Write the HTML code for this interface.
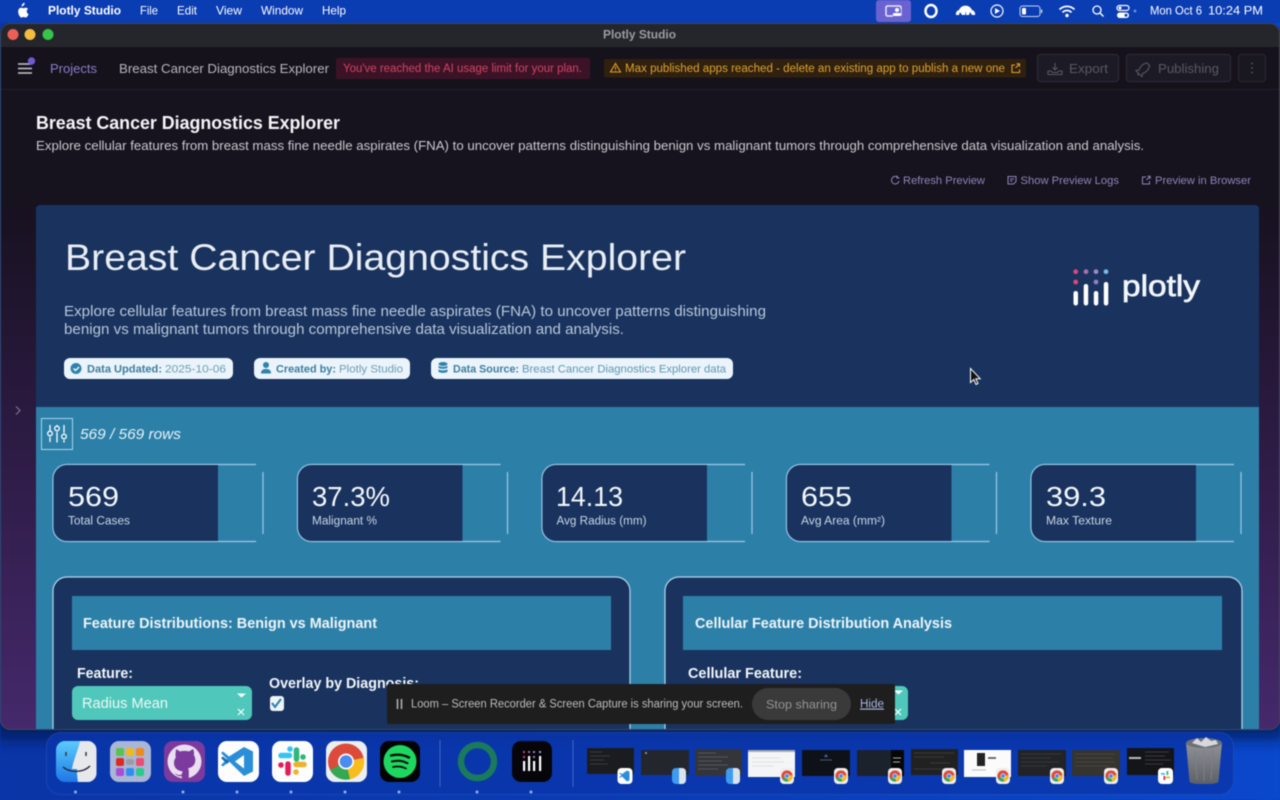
<!DOCTYPE html>
<html><head><meta charset="utf-8"><title>Plotly Studio</title>
<style>html,body{margin:0;padding:0;width:1280px;height:800px;overflow:hidden;background:#0a3cb4}svg{display:block;filter:blur(.4px)}text{font-family:"Liberation Sans",sans-serif;white-space:pre}</style></head>
<body>
<svg width="1280" height="800" viewBox="0 0 1280 800" xmlns="http://www.w3.org/2000/svg">
<defs>
<linearGradient id="desk" x1="0" y1="0" x2="1" y2="0"><stop offset="0" stop-color="#0a35a6"/><stop offset=".5" stop-color="#0a3cb4"/><stop offset="1" stop-color="#0a48cc"/></linearGradient>
<linearGradient id="bgv" x1="0" y1="0" x2="0" y2="1"><stop offset="0" stop-color="#14101c"/><stop offset=".25" stop-color="#17111f"/><stop offset=".55" stop-color="#2a1a40"/><stop offset="1" stop-color="#45296c"/></linearGradient>
<linearGradient id="fin" x1="0" y1="0" x2="0" y2="1"><stop offset="0" stop-color="#5ccbfb"/><stop offset="1" stop-color="#1d78e6"/></linearGradient>
<linearGradient id="trash" x1="0" y1="0" x2="0" y2="1"><stop offset="0" stop-color="#8f9297"/><stop offset="1" stop-color="#5d6066"/></linearGradient>
<filter id="sh" x="-5%" y="-5%" width="110%" height="110%"><feGaussianBlur stdDeviation="7"/></filter>
<clipPath id="win"><rect x="0" y="23" width="1280" height="707" rx="10"/></clipPath>
<g id="bchrome"><rect x="-7" y="-8" width="14" height="16" rx="4" fill="#eee"/><circle r="5.6" fill="#e0483a"/><path d="M0 0L-5 2.5A5.6 5.6 0 0 0 1 5.5Z" fill="#34a853"/><path d="M0 0L1 5.5A5.6 5.6 0 0 0 5.4 -1Z" fill="#f9bc15"/><circle r="2.5" fill="#fff"/><circle r="1.9" fill="#4285f4"/></g>
<g id="bfinder"><rect x="-7" y="-8" width="14" height="16" rx="4" fill="#3c9df0"/><path d="M0-8h3a4 4 0 0 1 4 4v8a4 4 0 0 1-4 4H0z" fill="#d9e3ee"/></g>
</defs>

<rect width="1280" height="800" fill="url(#desk)"/>
<!-- menu bar -->
<rect width="1280" height="23" fill="#0a3cb2"/>
<path d="M23.8 5.2c.7-.8 1-1.7.9-2.5-.9.1-1.8.6-2.3 1.3-.5.6-.9 1.5-.8 2.4.9 0 1.7-.5 2.2-1.200zM26.7 11.2c0-1.5 1.2-2.2 1.3-2.3-.7-1.1-1.8-1.2-2.2-1.2-.9-.1-1.900.6-2.400.6s-1.300-.6-2.100-.5c-1.100 0-2.100.6-2.600 1.600-1.100 2-.3 4.900.8 6.500.5.8 1.200 1.700 2 1.600.8 0 1.100-.5 2.100-.5s1.300.5 2.100.5c.9 0 1.400-.8 2-1.600.6-.9.9-1.800.9-1.800s-1.900-.8-1.900-2.900z" fill="#fff"/>
<g fill="#fff" font-size="12">
<text x="48" y="14.5" font-weight="700" lengthAdjust="spacingAndGlyphs" textLength="73">Plotly Studio</text>
<text x="140" y="14.5" lengthAdjust="spacingAndGlyphs" textLength="18">File</text>
<text x="177" y="14.5" lengthAdjust="spacingAndGlyphs" textLength="20">Edit</text>
<text x="216" y="14.5" lengthAdjust="spacingAndGlyphs" textLength="26">View</text>
<text x="261" y="14.5" lengthAdjust="spacingAndGlyphs" textLength="42">Window</text>
<text x="322" y="14.5" lengthAdjust="spacingAndGlyphs" textLength="24">Help</text>
<text x="1150" y="14.5" lengthAdjust="spacingAndGlyphs" textLength="52">Mon Oct 6</text>
<text x="1208" y="14.5" lengthAdjust="spacingAndGlyphs" textLength="55">10:24 PM</text>
</g>
<rect x="876" y="0" width="35" height="22" rx="3" fill="#6b62d2"/>
<rect x="886" y="6" width="15" height="10" rx="1.5" fill="none" stroke="#e8e8f8" stroke-width="1.5"/><rect x="893" y="9" width="8" height="8" fill="#6b62d2"/><circle cx="897" cy="10" r="2" fill="#fff"/><rect x="893" y="13" width="8" height="3" rx="1" fill="#fff"/>
<ellipse cx="931" cy="11" rx="5.5" ry="6" fill="none" stroke="#fff" stroke-width="2.5"/>
<path d="M956 15a4 4 0 0 1 3-5 7 7 0 0 1 13 0 4 4 0 0 1 3 5h-3l-2-3-1 3h-3v-4l-1 4h-3l-2-3-1 3z" fill="#fff"/>
<circle cx="997" cy="11" r="6" fill="none" stroke="#fff" stroke-width="1.2"/><path d="M995 8l5 3-5 3z" fill="#fff"/>
<rect x="1020" y="6" width="20" height="10.5" rx="2.5" fill="none" stroke="#c8d4f0" stroke-width="1"/><rect x="1022" y="8" width="4" height="6.5" rx="1" fill="#fff"/><rect x="1041" y="9.5" width="1.3" height="3.5" fill="#c8d4f0"/>
<g fill="none" stroke="#fff" stroke-width="1.7"><path d="M1059.5 9.5a10.5 10.5 0 0 1 15 0"/><path d="M1062.5 12.5a6 6 0 0 1 9 0"/></g><circle cx="1067" cy="15.5" r="1.7" fill="#fff"/>
<circle cx="1097" cy="10" r="4" fill="none" stroke="#fff" stroke-width="1.3"/><path d="M1100 13l3.5 3.5" stroke="#fff" stroke-width="1.4"/>
<rect x="1117" y="5.5" width="12" height="5" rx="2.5" fill="none" stroke="#fff" stroke-width="1.2"/><circle cx="1120" cy="8" r="1.5" fill="#fff"/><rect x="1117" y="12.5" width="12" height="5.500" rx="2.700" fill="#fff"/><circle cx="1126" cy="15.2" r="1.5" fill="#0a3cb2"/>
<circle cx="1135" cy="11" r="1.5" fill="#5d8be0"/>

<!-- window shadow -->
<rect x="-10" y="40" width="1300" height="700" rx="12" fill="#02124a" opacity=".7" filter="url(#sh)"/>
<g clip-path="url(#win)">
<rect x="0" y="23" width="1280" height="707" fill="url(#bgv)"/>
<rect x="0" y="23" width="1280" height="25" fill="#25262b"/>
<rect x="0" y="47" width="1280" height="42" fill="#15121b"/>
<rect x="0" y="89" width="1280" height="1" fill="#25222b"/>
<rect x="0" y="90" width="1280" height="115" fill="#16121e"/>

<!-- content panel -->
<rect x="36" y="205" width="1223" height="560" rx="4" fill="#19335e"/>
<rect x="36" y="407" width="1223" height="340" fill="#2c80a8"/>

<text x="65" y="270" font-size="37" fill="#e9eef5" lengthAdjust="spacingAndGlyphs" textLength="621">Breast Cancer Diagnostics Explorer</text>
<text x="64" y="316" font-size="14.5" fill="#b9c7da" lengthAdjust="spacingAndGlyphs" textLength="702">Explore cellular features from breast mass fine needle aspirates (FNA) to uncover patterns distinguishing</text>
<text x="64" y="334" font-size="14.5" fill="#b9c7da" lengthAdjust="spacingAndGlyphs" textLength="560">benign vs malignant tumors through comprehensive data visualization and analysis.</text>

<!-- pills -->
<g font-size="11">
<rect x="64" y="358" width="169" height="21" rx="6" fill="#eaf4fa"/>
<circle cx="76" cy="368.5" r="5.5" fill="#2f82ad"/><path d="M73.5 368.5l2 2 3.5-3.5" fill="none" stroke="#fff" stroke-width="1.3"/>
<text x="87" y="372.5" font-weight="700" fill="#3f7da0" lengthAdjust="spacingAndGlyphs" textLength="75">Data Updated:</text><text x="165" y="372.5" fill="#6e9db8" lengthAdjust="spacingAndGlyphs" textLength="61">2025-10-06</text>
<rect x="254" y="358" width="156" height="21" rx="6" fill="#eaf4fa"/>
<circle cx="266" cy="365" r="3" fill="#2f82ad"/><path d="M261 373.5c0-3.5 2-4.5 5-4.5s5 1 5 4.5z" fill="#2f82ad"/>
<text x="276" y="372.5" font-weight="700" fill="#3f7da0" lengthAdjust="spacingAndGlyphs" textLength="60">Created by:</text><text x="339" y="372.5" fill="#6e9db8" lengthAdjust="spacingAndGlyphs" textLength="64">Plotly Studio</text>
<rect x="431" y="358" width="302" height="21" rx="6" fill="#eaf4fa"/>
<ellipse cx="443" cy="364" rx="4.5" ry="2" fill="#2f82ad"/><path d="M438.5 365.5c1 1.8 8 1.8 9 0v2c-1 1.8-8 1.8-9 0zM438.5 369c1 1.8 8 1.8 9 0v2.5c-1 1.8-8 1.8-9 0z" fill="#2f82ad"/>
<text x="453" y="372.5" font-weight="700" fill="#3f7da0" lengthAdjust="spacingAndGlyphs" textLength="66">Data Source:</text><text x="522" y="372.5" fill="#5f96b5" lengthAdjust="spacingAndGlyphs" textLength="204">Breast Cancer Diagnostics Explorer data</text>
</g>

<!-- plotly logo -->
<g>
<circle cx="1075.7" cy="271.7" r="2.4" fill="#e0457f"/><circle cx="1086" cy="271.7" r="2.4" fill="#b06ca8"/><circle cx="1096" cy="271.7" r="2.4" fill="#9a88c8"/><circle cx="1106" cy="271.7" r="2.4" fill="#7cb8e8"/>
<circle cx="1075.7" cy="282" r="2.4" fill="#e0457f"/><circle cx="1096" cy="282" r="2.4" fill="#8e80c4"/>
<g fill="#fff"><rect x="1073.5" y="291" width="4.5" height="14.5" rx="2.2"/><rect x="1083.7" y="284" width="4.5" height="21.5" rx="2.2"/><rect x="1093.8" y="291" width="4.5" height="14.5" rx="2.2"/><rect x="1103.8" y="282" width="4.5" height="23.5" rx="2.2"/></g>
<text x="1122" y="296" font-size="30" fill="#f2f6fa" stroke="#f2f6fa" stroke-width=".7" lengthAdjust="spacingAndGlyphs" textLength="78">plotly</text>
</g>

<!-- filter row -->
<rect x="41.5" y="418.5" width="31" height="31" fill="#2c80a8" stroke="#a8d4ea" stroke-width="1"/>
<g stroke="#fff" stroke-width="1.3" fill="none"><path d="M50 425v5.500M50 437v5M57 425v.5M57 432v10.500M64 425v8M64 440v2.500"/><circle cx="50" cy="433.5" r="2.3"/><circle cx="57" cy="428.5" r="2.3"/><circle cx="64" cy="436.5" r="2.3"/></g>
<text x="80" y="439" font-size="14.5" font-style="italic" fill="#e8f1f7" lengthAdjust="spacingAndGlyphs" textLength="101">569 / 569 rows</text>

<!-- stat cards -->
<g id="c1">
<path d="M256 464.5H67a14 14 0 0 0-14 14v49a14 14 0 0 0 14 14h189" fill="none" stroke="#9cc8e8" stroke-width="1.2"/>
<path d="M218 465H67a13.5 13.5 0 0 0-13.5 13.5v49A13.5 13.5 0 0 0 67 541h151z" fill="#19335e"/>
<path d="M263 472v62" stroke="#9cc8e8" stroke-width="1.2"/>
</g>
<use href="#c1" x="244.5"/><use href="#c1" x="489"/><use href="#c1" x="733.5"/><use href="#c1" x="978"/>
<g fill="#f3f7fb" font-size="28">
<text x="68" y="506" lengthAdjust="spacingAndGlyphs" textLength="51">569</text><text x="312" y="506" lengthAdjust="spacingAndGlyphs" textLength="78">37.3%</text><text x="556" y="506" lengthAdjust="spacingAndGlyphs" textLength="67">14.13</text><text x="801" y="506" lengthAdjust="spacingAndGlyphs" textLength="51">655</text><text x="1046" y="506" lengthAdjust="spacingAndGlyphs" textLength="60">39.3</text>
</g>
<g fill="#c9d6e6" font-size="11.5">
<text x="68" y="524.5" lengthAdjust="spacingAndGlyphs" textLength="62">Total Cases</text><text x="312" y="524.5" lengthAdjust="spacingAndGlyphs" textLength="65">Malignant %</text><text x="556.5" y="524.5" lengthAdjust="spacingAndGlyphs" textLength="90">Avg Radius (mm)</text><text x="801" y="524.5" lengthAdjust="spacingAndGlyphs" textLength="84">Avg Area (mm²)</text><text x="1046" y="524.5" lengthAdjust="spacingAndGlyphs" textLength="66">Max Texture</text>
</g>

<!-- chart cards -->
<rect x="53" y="577" width="577" height="200" rx="14" fill="#19335e" stroke="#b4d6ec" stroke-width="1.2"/>
<rect x="665" y="577" width="577" height="200" rx="14" fill="#19335e" stroke="#b4d6ec" stroke-width="1.2"/>
<rect x="72" y="596" width="539" height="54" fill="#2c80a8"/>
<rect x="683" y="596" width="539" height="54" fill="#2c80a8"/>
<text x="83" y="628" font-size="14.5" font-weight="700" fill="#eef4f9" lengthAdjust="spacingAndGlyphs" textLength="294">Feature Distributions: Benign vs Malignant</text>
<text x="695" y="628" font-size="14.5" font-weight="700" fill="#eef4f9" lengthAdjust="spacingAndGlyphs" textLength="257">Cellular Feature Distribution Analysis</text>
<text x="77" y="678" font-size="14.5" font-weight="700" fill="#f3f6fa" lengthAdjust="spacingAndGlyphs" textLength="56">Feature:</text>
<text x="688" y="678" font-size="14.5" font-weight="700" fill="#f3f6fa" lengthAdjust="spacingAndGlyphs" textLength="114">Cellular Feature:</text>
<text x="269" y="688" font-size="14.5" font-weight="700" fill="#f3f6fa" lengthAdjust="spacingAndGlyphs" textLength="150">Overlay by Diagnosis:</text>
<rect x="72" y="686" width="180" height="34" rx="6" fill="#4fc8bb"/>
<text x="82" y="708" font-size="14.5" fill="#eef8f6" lengthAdjust="spacingAndGlyphs" textLength="86">Radius Mean</text>
<path d="M237 693.5h9l-4.5 4z" fill="#fff"/><path d="M238 709l6 6M244 709l-6 6" stroke="#fff" stroke-width="1.2"/>
<rect x="270" y="696" width="14" height="15" rx="3" fill="#eef4f8"/><path d="M272 703l3 4 6-8" fill="none" stroke="#2c80a8" stroke-width="2"/>
<rect x="684" y="686" width="224" height="34" rx="6" fill="#4fc8bb"/>
<path d="M894 690.5h9l-4.5 4z" fill="#fff"/><path d="M895 709l6 6M901 709l-6 6" stroke="#fff" stroke-width="1.2"/>
</g>

<!-- title bar -->
<circle cx="13" cy="34.5" r="5.5" fill="#ec5f57"/><circle cx="30" cy="34.5" r="5.5" fill="#f5bd3e"/><circle cx="48" cy="34.5" r="5.5" fill="#35c54a"/>
<text x="603" y="38.5" font-size="12" font-weight="700" fill="#9c9da1" lengthAdjust="spacingAndGlyphs" textLength="73">Plotly Studio</text>
<rect x=".5" y="23.5" width="1279" height="706" rx="10" fill="none" stroke="#3e4656" stroke-width="1"/>

<!-- nav -->
<path d="M18 64h13M18 68.5h14M18 73h14" stroke="#c8c8cc" stroke-width="1.6"/>
<circle cx="31.5" cy="61" r="3.7" fill="#7257d6"/>
<text x="50" y="73" font-size="13" fill="#8a7fc8" lengthAdjust="spacingAndGlyphs" textLength="47">Projects</text>
<text x="119" y="73" font-size="13" fill="#b8b8bc" lengthAdjust="spacingAndGlyphs" textLength="210">Breast Cancer Diagnostics Explorer</text>
<rect x="336" y="58" width="254" height="21" rx="2" fill="#3c1326"/>
<text x="343" y="72" font-size="11.5" fill="#d04465" lengthAdjust="spacingAndGlyphs" textLength="239">You've reached the AI usage limit for your plan.</text>
<rect x="604" y="59" width="422" height="18.5" rx="2" fill="#30200f"/>
<path d="M615.5 63.5l5 8.5h-10z" fill="none" stroke="#dfa02a" stroke-width="1.1"/><path d="M615.5 66.5v3M615.5 70.3v.8" stroke="#dfa02a" stroke-width="1"/>
<text x="625" y="72" font-size="11.5" fill="#dca42e" lengthAdjust="spacingAndGlyphs" textLength="380">Max published apps reached - delete an existing app to publish a new one</text>
<path d="M1015 65h-3v7.500h7.500v-3M1015.5 68l4-4M1016.5 63.8h3v3" fill="none" stroke="#dca42e" stroke-width="1.1"/>

<rect x="1037.5" y="54.5" width="81" height="27" rx="3" fill="#1c1a25" stroke="#2f2c3a"/>
<path d="M1048 71v3.500h14V71h-3l-1.500 1.500h-5L1051 71zM1055 63v7M1052.5 67.5l2.500 2.500 2.500-2.500" fill="none" stroke="#5b5865" stroke-width="1.1"/>
<text x="1069" y="73" font-size="13" fill="#5b5865" lengthAdjust="spacingAndGlyphs" textLength="39">Export</text>
<rect x="1126.5" y="54.5" width="104" height="27" rx="3" fill="#1c1a25" stroke="#2f2c3a"/>
<path d="M1149 63c-4 .5-7 3.500-8 7l-3 .5 2.500 3-1 1.500 1.500-1 3 2.500.5-3c3.500-1 6.500-4 7-8z" fill="none" stroke="#5b5865" stroke-width="1.1" transform="translate(-2 0)"/>
<text x="1158" y="73" font-size="13" fill="#5b5865" lengthAdjust="spacingAndGlyphs" textLength="61">Publishing</text>
<rect x="1238.5" y="54.5" width="27" height="27" rx="3" fill="#191820" stroke="#2b2a33"/>
<circle cx="1252" cy="63.5" r=".9" fill="#5b5865"/><circle cx="1252" cy="68" r=".9" fill="#5b5865"/><circle cx="1252" cy="72.5" r=".9" fill="#5b5865"/>

<!-- header -->
<text x="36" y="129" font-size="18" font-weight="700" fill="#f5f5f7" lengthAdjust="spacingAndGlyphs" textLength="304">Breast Cancer Diagnostics Explorer</text>
<text x="36" y="150" font-size="13" fill="#c9c9ce" lengthAdjust="spacingAndGlyphs" textLength="1108">Explore cellular features from breast mass fine needle aspirates (FNA) to uncover patterns distinguishing benign vs malignant tumors through comprehensive data visualization and analysis.</text>
<g font-size="11" fill="#8f86b8">
<text x="903" y="184" lengthAdjust="spacingAndGlyphs" textLength="82">Refresh Preview</text><text x="1020.5" y="184" lengthAdjust="spacingAndGlyphs" textLength="98.5">Show Preview Logs</text><text x="1155" y="184" lengthAdjust="spacingAndGlyphs" textLength="96">Preview in Browser</text>
</g>
<path d="M898 177.5a3.800 3.800 0 1 0 1 3.500M897 175.5v2.500h2.500" fill="none" stroke="#8f86b8" stroke-width="1"/>
<path d="M1008 176.5h8v5l-2.500 2.500H1008zM1010 179h4M1010 181h2.500" fill="none" stroke="#8f86b8" stroke-width="1"/>
<path d="M1146 177h-3.500v7h7v-3M1146.5 180l3.500-3.500M1147.5 176.3h2.700v2.700" fill="none" stroke="#8f86b8" stroke-width="1"/>

<path d="M16 406.5l4 4-4 4" fill="none" stroke="#7f7a94" stroke-width="1.1"/>

<!-- cursor -->
<path d="M970.5 368.5v14l3.300-3 2.200 5 2-1-2.200-4.800h4.400z" fill="#111" stroke="#fff" stroke-width="1"/>

<!-- loom bar -->
<rect x="387" y="684" width="508" height="40" rx="2" fill="#1e1e1f"/>
<path d="M397.5 699v10M401.5 699v10" stroke="#b0b0b0" stroke-width="1.6"/>
<text x="411" y="707.5" font-size="11.5" fill="#bdbdbd" lengthAdjust="spacingAndGlyphs" textLength="332">Loom – Screen Recorder &amp; Screen Capture is sharing your screen.</text>
<rect x="752" y="688" width="99" height="32" rx="16" fill="#3a3a3b"/>
<text x="766" y="708.5" font-size="12" fill="#959595" lengthAdjust="spacingAndGlyphs" textLength="71">Stop sharing</text>
<text x="860" y="707.5" font-size="11.5" fill="#a9b8e0" text-decoration="underline" lengthAdjust="spacingAndGlyphs" textLength="24">Hide</text>

<!-- dock -->
<rect x="46.5" y="732.5" width="1187" height="62" rx="14" fill="#0a36ac" fill-opacity=".85" stroke="#3a62c4" stroke-opacity=".35"/>
<!-- finder -->
<rect x="56" y="741" width="40.5" height="41" rx="9" fill="url(#fin)"/>
<path d="M80 741h7.500a9 9 0 0 1 9 9v23a9 9 0 0 1-9 9H78c-1-6-1-10-1-13h-5c1-8 6-18 8-28z" fill="#e6e8ec"/>
<path d="M66 752v4M86 752v4" stroke="#334" stroke-width="1.5"/>
<path d="M63 767c7 6 20 6 27-1" fill="none" stroke="#223" stroke-width="1.3"/>
<!-- launchpad -->
<rect x="110" y="741" width="41" height="41" rx="9" fill="#a9b6d6"/>
<g><rect x="116" y="748" width="8" height="8" rx="2" fill="#58c24e"/><rect x="126" y="748" width="8" height="8" rx="2" fill="#f2b71f"/><rect x="136" y="748" width="8" height="8" rx="2" fill="#ef8a1c"/><rect x="116" y="758" width="8" height="8" rx="2" fill="#dc2a22"/><rect x="126" y="759" width="8" height="6" rx="2" fill="#9a9ca4"/><rect x="136" y="758" width="8" height="8" rx="2" fill="#ec4b72"/><rect x="116" y="768" width="8" height="8" rx="2" fill="#a84ed2"/><rect x="126" y="768" width="8" height="8" rx="2" fill="#2f8ff0"/><rect x="136" y="768" width="8" height="8" rx="2" fill="#2ec88c"/></g>
<!-- github -->
<rect x="164" y="741" width="41" height="41" rx="9" fill="#7d3a9e"/>
<circle cx="184.5" cy="761.5" r="17" fill="#e9dff0"/>
<path d="M176 749l4 2.500c3-.8 6-.8 9 0l4-2.500c1 2 1.300 4 .8 6 2 3 2 7 0 10-1.500 2-4 3-6 3.400 1 1 1 2 1 3.500V779h-7v-3c-3 .5-5 0-7-3 2 1 3 3 7 1.500 0-1 .3-2 1-3-3-.5-6-1.500-7.500-4-1.800-3-1.800-7 .5-10-.5-2-.3-4 .2-7.500z" fill="#7d3a9e"/>
<!-- vscode -->
<rect x="218" y="741" width="41" height="41" rx="9" fill="#fdfdfd"/>
<path d="M244 747l9 4.500v20L244 776l-15-14.500-6 5-2-1.500 6-6-6-6 2-1.500 6 5z" fill="#2a8fd8"/>
<path d="M244 755l-9 6.500 9 7z" fill="#fff"/>
<path d="M244 747l-15 14.500-6-5-2 1.500 6 6 2-2z" fill="#1a6db5"/>
<!-- slack -->
<rect x="272" y="741" width="41" height="41" rx="9" fill="#fdfdfd"/>
<g stroke-linecap="round" stroke-width="5.5" fill="none"><path d="M281 755.5h8.500" stroke="#36c5f0"/><path d="M296.5 750v9" stroke="#2eb67d"/><path d="M296 764.5h8" stroke="#ecb22e"/><path d="M288 764v9" stroke="#e01e5a"/></g>
<circle cx="290" cy="749" r="2.8" fill="#36c5f0"/><circle cx="303" cy="757" r="2.8" fill="#2eb67d"/><circle cx="296" cy="772" r="2.8" fill="#ecb22e"/><circle cx="281" cy="765" r="2.8" fill="#e01e5a"/>
<!-- chrome -->
<rect x="326" y="741" width="41" height="41" rx="9" fill="#eceff2"/>
<circle cx="346" cy="761.5" r="18" fill="#dc4a3a"/>
<path d="M346 761.5L330 770a18 18 0 0 0 20 9.300z" fill="#35a853"/>
<path d="M346 761.5l4 17.800a18 18 0 0 0 13.700-21.500z" fill="#f8bd1c"/>
<circle cx="346" cy="761.5" r="8" fill="#fff"/><circle cx="346" cy="761.5" r="6.3" fill="#4a8cf0"/>
<!-- spotify -->
<rect x="380" y="741" width="40" height="41" rx="9" fill="#030303"/>
<circle cx="400" cy="761.5" r="16.5" fill="#1ed760"/>
<g fill="none" stroke="#0a0a0a" stroke-linecap="round"><path d="M391 755.5c6-1.500 12-1 18 2" stroke-width="2.4"/><path d="M392 761.5c5-1.300 11-.8 15.500 1.700" stroke-width="2"/><path d="M393 767c4.500-1 9-.6 13 1.500" stroke-width="1.7"/></g>
<path d="M440 740v47" stroke="#3f66c4" stroke-width="1"/>
<!-- loom ring -->
<circle cx="477.5" cy="761.5" r="16.5" fill="none" stroke="#1a7a5c" stroke-width="6.5"/>
<!-- plotly app -->
<rect x="512" y="741" width="40" height="41" rx="9" fill="#06060a"/>
<g><circle cx="524" cy="752" r="1.1" fill="#e0457f"/><circle cx="529" cy="752" r="1.1" fill="#b06ca8"/><circle cx="534" cy="752" r="1.1" fill="#9a88c8"/><circle cx="540" cy="752" r="1.1" fill="#7cb8e8"/><circle cx="524" cy="757" r="1.1" fill="#e0457f"/><circle cx="534" cy="757" r="1.1" fill="#9a88c8"/>
<g fill="#fff"><rect x="523" y="761" width="2.2" height="10"/><rect x="528" y="756" width="2.2" height="15"/><rect x="533" y="761" width="2.2" height="10"/><rect x="539" y="756" width="2.2" height="15"/></g></g>
<path d="M573 740v47" stroke="#3f66c4" stroke-width="1"/>
<!-- dots -->
<g fill="#8fb0ee"><circle cx="75.5" cy="792" r="1.5"/><circle cx="183" cy="792" r="1.5"/><circle cx="237" cy="792" r="1.5"/><circle cx="291" cy="792" r="1.5"/><circle cx="345" cy="792" r="1.5"/><circle cx="399" cy="792" r="1.5"/><circle cx="477" cy="792" r="1.5"/><circle cx="531" cy="792" r="1.5"/></g>
<!-- thumbnails -->
<rect x="587" y="748" width="47" height="26" fill="#1b1c20"/><path d="M590 752h12M590 756h20M590 760h14M590 764h18" stroke="#3a3a34" stroke-width="1"/>
<rect x="641" y="750" width="48" height="25" fill="#23262c"/><circle cx="646" cy="753" r="1" fill="#8ac"/>
<rect x="695" y="749" width="47" height="27" fill="#33353a"/><path d="M698 753h18M698 757h30M698 761h24M698 765h30M698 769h20" stroke="#55575c" stroke-width="1"/>
<rect x="748" y="750" width="47" height="27" fill="#f4f5f6"/><rect x="748" y="750" width="47" height="2" fill="#aaa"/><path d="M752 758h28M752 762h32M752 766h22" stroke="#e0e1e4" stroke-width="1"/>
<rect x="802" y="750" width="48" height="26" fill="#0e1218"/><path d="M826 754l2 3h-4z" fill="#3a68c8"/><path d="M820 760h12" stroke="#556" stroke-width="1"/>
<rect x="857" y="750" width="47" height="26" fill="#1b222c"/><rect x="891" y="750" width="13" height="26" fill="#060606"/><path d="M893 758h8M893 762h7" stroke="#aaa" stroke-width="1"/>
<rect x="911" y="749" width="47" height="26" fill="#212121"/><path d="M914 753h40M914 757h30M930 763h20M914 769h36" stroke="#3a3a3c" stroke-width="1"/>
<rect x="964" y="750" width="47" height="27" fill="#fbfbfb"/><rect x="977" y="753" width="8" height="13" fill="#222"/><path d="M988 758h8" stroke="#444" stroke-width="1.5"/><path d="M972 770h14" stroke="#bbb" stroke-width="1"/>
<rect x="1018" y="750" width="48" height="26" fill="#212326"/><path d="M1021 754h40M1021 758h30M1021 762h38M1021 766h26" stroke="#35373a" stroke-width="1"/>
<rect x="1072" y="750" width="48" height="26" fill="#36342f"/><path d="M1075 754h40M1075 758h38M1075 762h40M1075 766h34" stroke="#474540" stroke-width="1"/>
<rect x="1127" y="748" width="47" height="27" fill="#141518"/><rect x="1129" y="757" width="12" height="2" fill="#bbb"/><path d="M1145 752h24M1145 756h20M1145 760h26M1145 764h18" stroke="#3a3b3f" stroke-width="1"/>
<!-- badges -->
<rect x="617.5" y="768" width="15" height="16" rx="4" fill="#fff"/><path d="M627 770.5l2.500 1.200v8.600l-2.500 1.200-5-5-2 1.500-.8-.6 2.200-2.100-2.200-2.100.8-.6 2 1.500z" fill="#2a8fd8"/>
<use href="#bfinder" x="679" y="776"/><use href="#bfinder" x="733" y="776"/>
<use href="#bchrome" x="787" y="776"/><use href="#bchrome" x="841" y="776"/><use href="#bchrome" x="895" y="776"/><use href="#bchrome" x="949" y="776"/><use href="#bchrome" x="1003" y="776"/><use href="#bchrome" x="1057" y="776"/><use href="#bchrome" x="1111" y="776"/>
<rect x="1158" y="768" width="15" height="16" rx="4" fill="#fff"/><rect x="1161" y="773" width="4" height="1.8" fill="#36c5f0"/><rect x="1166.5" y="771" width="1.8" height="4" fill="#2eb67d"/><rect x="1166" y="776.5" width="4" height="1.8" fill="#ecb22e"/><rect x="1163.5" y="776" width="1.8" height="4" fill="#e01e5a"/>
<!-- trash -->
<path d="M1186 743h36l-3.500 38c-.2 2-3 3-14.500 3s-14.300-1-14.500-3z" fill="url(#trash)"/>
<ellipse cx="1204" cy="743" rx="18" ry="5" fill="#6d7076"/>
<path d="M1192 743l5-5 4 4 5-5 5 4 5-1 2 4-13 3z" fill="#d6d8dc"/>
<path d="M1195 750l2 30M1204 750v31M1213 750l-2 30" stroke="#7c7f85" stroke-width="1"/>
</svg>
</body></html>
